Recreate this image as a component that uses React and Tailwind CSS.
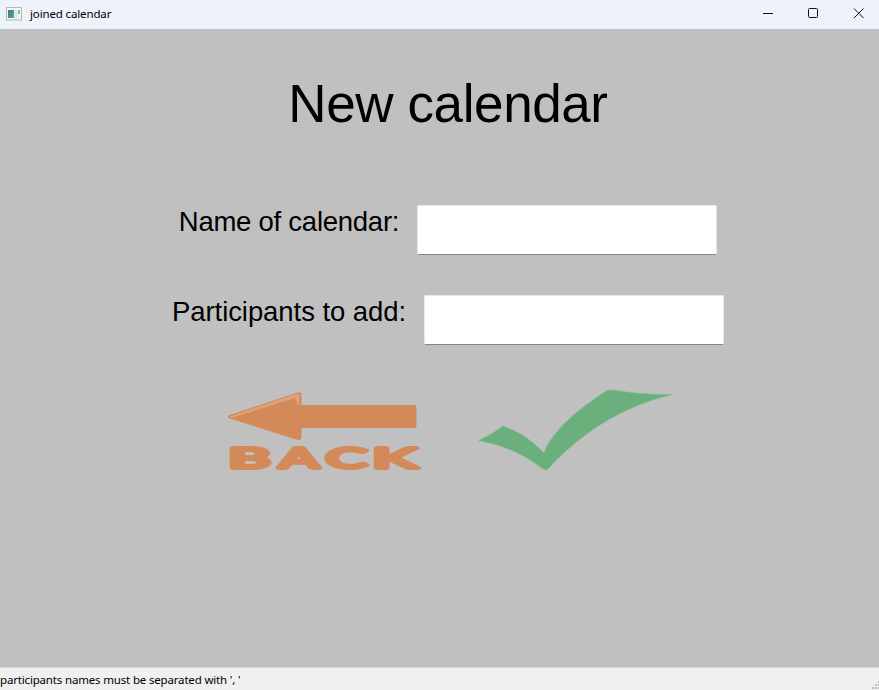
function TitleBar() {
  return (
    <header className="flex h-[29px] shrink-0 items-center bg-[#eef3fb] pl-[6px]">
      <svg width="16" height="14" viewBox="0 0 16 14" className="mr-2 mb-[2px]" aria-hidden="true">
        <defs>
          <linearGradient id="pane" x1="0" y1="0" x2="1" y2="1">
            <stop offset="0" stopColor="#4873a8" />
            <stop offset="1" stopColor="#4fae74" />
          </linearGradient>
        </defs>
        <rect x="0.5" y="0.5" width="15" height="12.5" fill="#f4f4f4" stroke="#b3b8bc" />
        <rect x="2" y="3" width="6" height="8" fill="url(#pane)" />
        <rect x="9" y="3" width="2" height="8" fill="#dcdfe2" />
        <rect x="12" y="3" width="2" height="4" fill="#83bd98" />
      </svg>
      <span className="mb-[2px] whitespace-nowrap text-[11.5px] leading-4 tracking-[-0.14px] text-black">
        joined calendar
      </span>
      <div className="ml-auto flex h-full items-start">
        <svg width="120" height="28" viewBox="0 0 120 28" fill="none" stroke="#111" aria-hidden="true">
          <path d="M4 13.5H14" />
          <rect x="49.5" y="8.5" width="9" height="9" rx="1" />
          <path d="M95 8.500L104.500 18M104.500 8.500L95 18" />
        </svg>
      </div>
    </header>
  );
}

function Field({ label, labelClass }) {
  return (
    <label className="flex h-[50px] justify-center gap-[18px]">
      <span className={"whitespace-nowrap text-[27.5px] leading-[33px] " + labelClass}>{label}</span>
      <input
        type="text"
        className="h-[50px] w-[300px] rounded-[2px] border border-[#e9e9e9] border-b-[#858585] bg-white px-2 text-[26px] outline-none"
      />
    </label>
  );
}

function BackButton() {
  return (
    <button type="button" aria-label="Back" className="h-[90px] w-[200px]">
      <svg width="200" height="90" viewBox="225 385 200 90">
        <path
          d="M228.500 415.500L296 393Q301.500 391 301.500 395V405H414Q416.500 405 416.500 407.500V425Q416.500 428 414 428H301.500V437Q301.500 441 296 439.500L229.500 418.500Q227 417 228.500 415.500Z"
          fill="#d38a58"
        />
        <path d="M230 416.500L294 394.600Q300 392.700 299.500 397L299 405.500L297.500 405.500Q296.500 400 294.500 398L231.500 418Z" fill="#dfa27c" />
        <g
          fill="#d38a58"
          stroke="#d38a58"
          strokeWidth="3.8"
          strokeLinejoin="round"
          strokeLinecap="round"
          className="font-['Lato',sans-serif] text-[27px] font-normal"
        >
          <text transform="translate(228.500 467.500) scale(2 1)" x="0" y="0" textLength="21" lengthAdjust="spacingAndGlyphs">B</text>
          <text transform="translate(279.500 467.500) scale(2 1)" x="0" y="0" textLength="19.5" lengthAdjust="spacingAndGlyphs">A</text>
          <text transform="translate(326 467.500) scale(2 1)" x="0" y="0" textLength="20.5" lengthAdjust="spacingAndGlyphs">C</text>
          <text transform="translate(372.500 467.500) scale(2 1)" x="0" y="0" textLength="22" lengthAdjust="spacingAndGlyphs">K</text>
        </g>
      </svg>
    </button>
  );
}

function ConfirmButton() {
  return (
    <button type="button" aria-label="Confirm" className="h-[90px] w-[200px]">
      <svg width="200" height="90" viewBox="475 385 200 90">
        <path
          d="M478.500 440.500Q492 434.500 503 426Q525 433 544 453C552 431 577 410 606 391Q609 389.500 614 390Q637 394.500 673 394.500C620 406 577 437 548 469Q546 471 543 469Q515 447 478.500 440.500Z"
          fill="#6bb07c"
          stroke="#7fbd8d"
          strokeWidth="0.6"
        />
      </svg>
    </button>
  );
}

export default function App() {
  return (
    <div className="flex h-[690px] w-[879px] flex-col overflow-hidden bg-[#c0c0c0] font-['Noto_Sans',sans-serif] text-black">
      <TitleBar />
      <main className="flex flex-1 flex-col font-['Liberation_Sans',Arial,sans-serif]">
        <h1 className="mt-[45px] pl-[17px] text-center text-[53px] leading-[60px] tracking-[-0.4px]">New calendar</h1>
        <div className="mt-[71px] flex flex-col gap-10 pl-[17px]">
          <Field label="Name of calendar:" labelClass="tracking-[-0.25px]" />
          <Field label="Participants to add:" labelClass="tracking-[-0.07px]" />
        </div>
        <div className="mt-10 flex gap-[50px] pl-[225px]">
          <BackButton />
          <ConfirmButton />
        </div>
      </main>
      <footer className="flex h-[23px] shrink-0 items-end justify-between border-t border-[#d8d8d8] bg-[#f0f0f0]">
        <span className="whitespace-nowrap pb-[2px] text-[11.5px] leading-4 tracking-[-0.17px]">
          participants names must be separated with ', '
        </span>
        <svg width="9" height="9" viewBox="0 0 9 9" fill="#bfbfbf" aria-hidden="true">
          <path d="M8 0h1v2h-1zM5 3h2v2h-2zM8 3h1v2h-1zM2 6h2v2h-2zM5 6h2v2h-2zM8 6h1v2h-1z" />
        </svg>
      </footer>
    </div>
  );
}
